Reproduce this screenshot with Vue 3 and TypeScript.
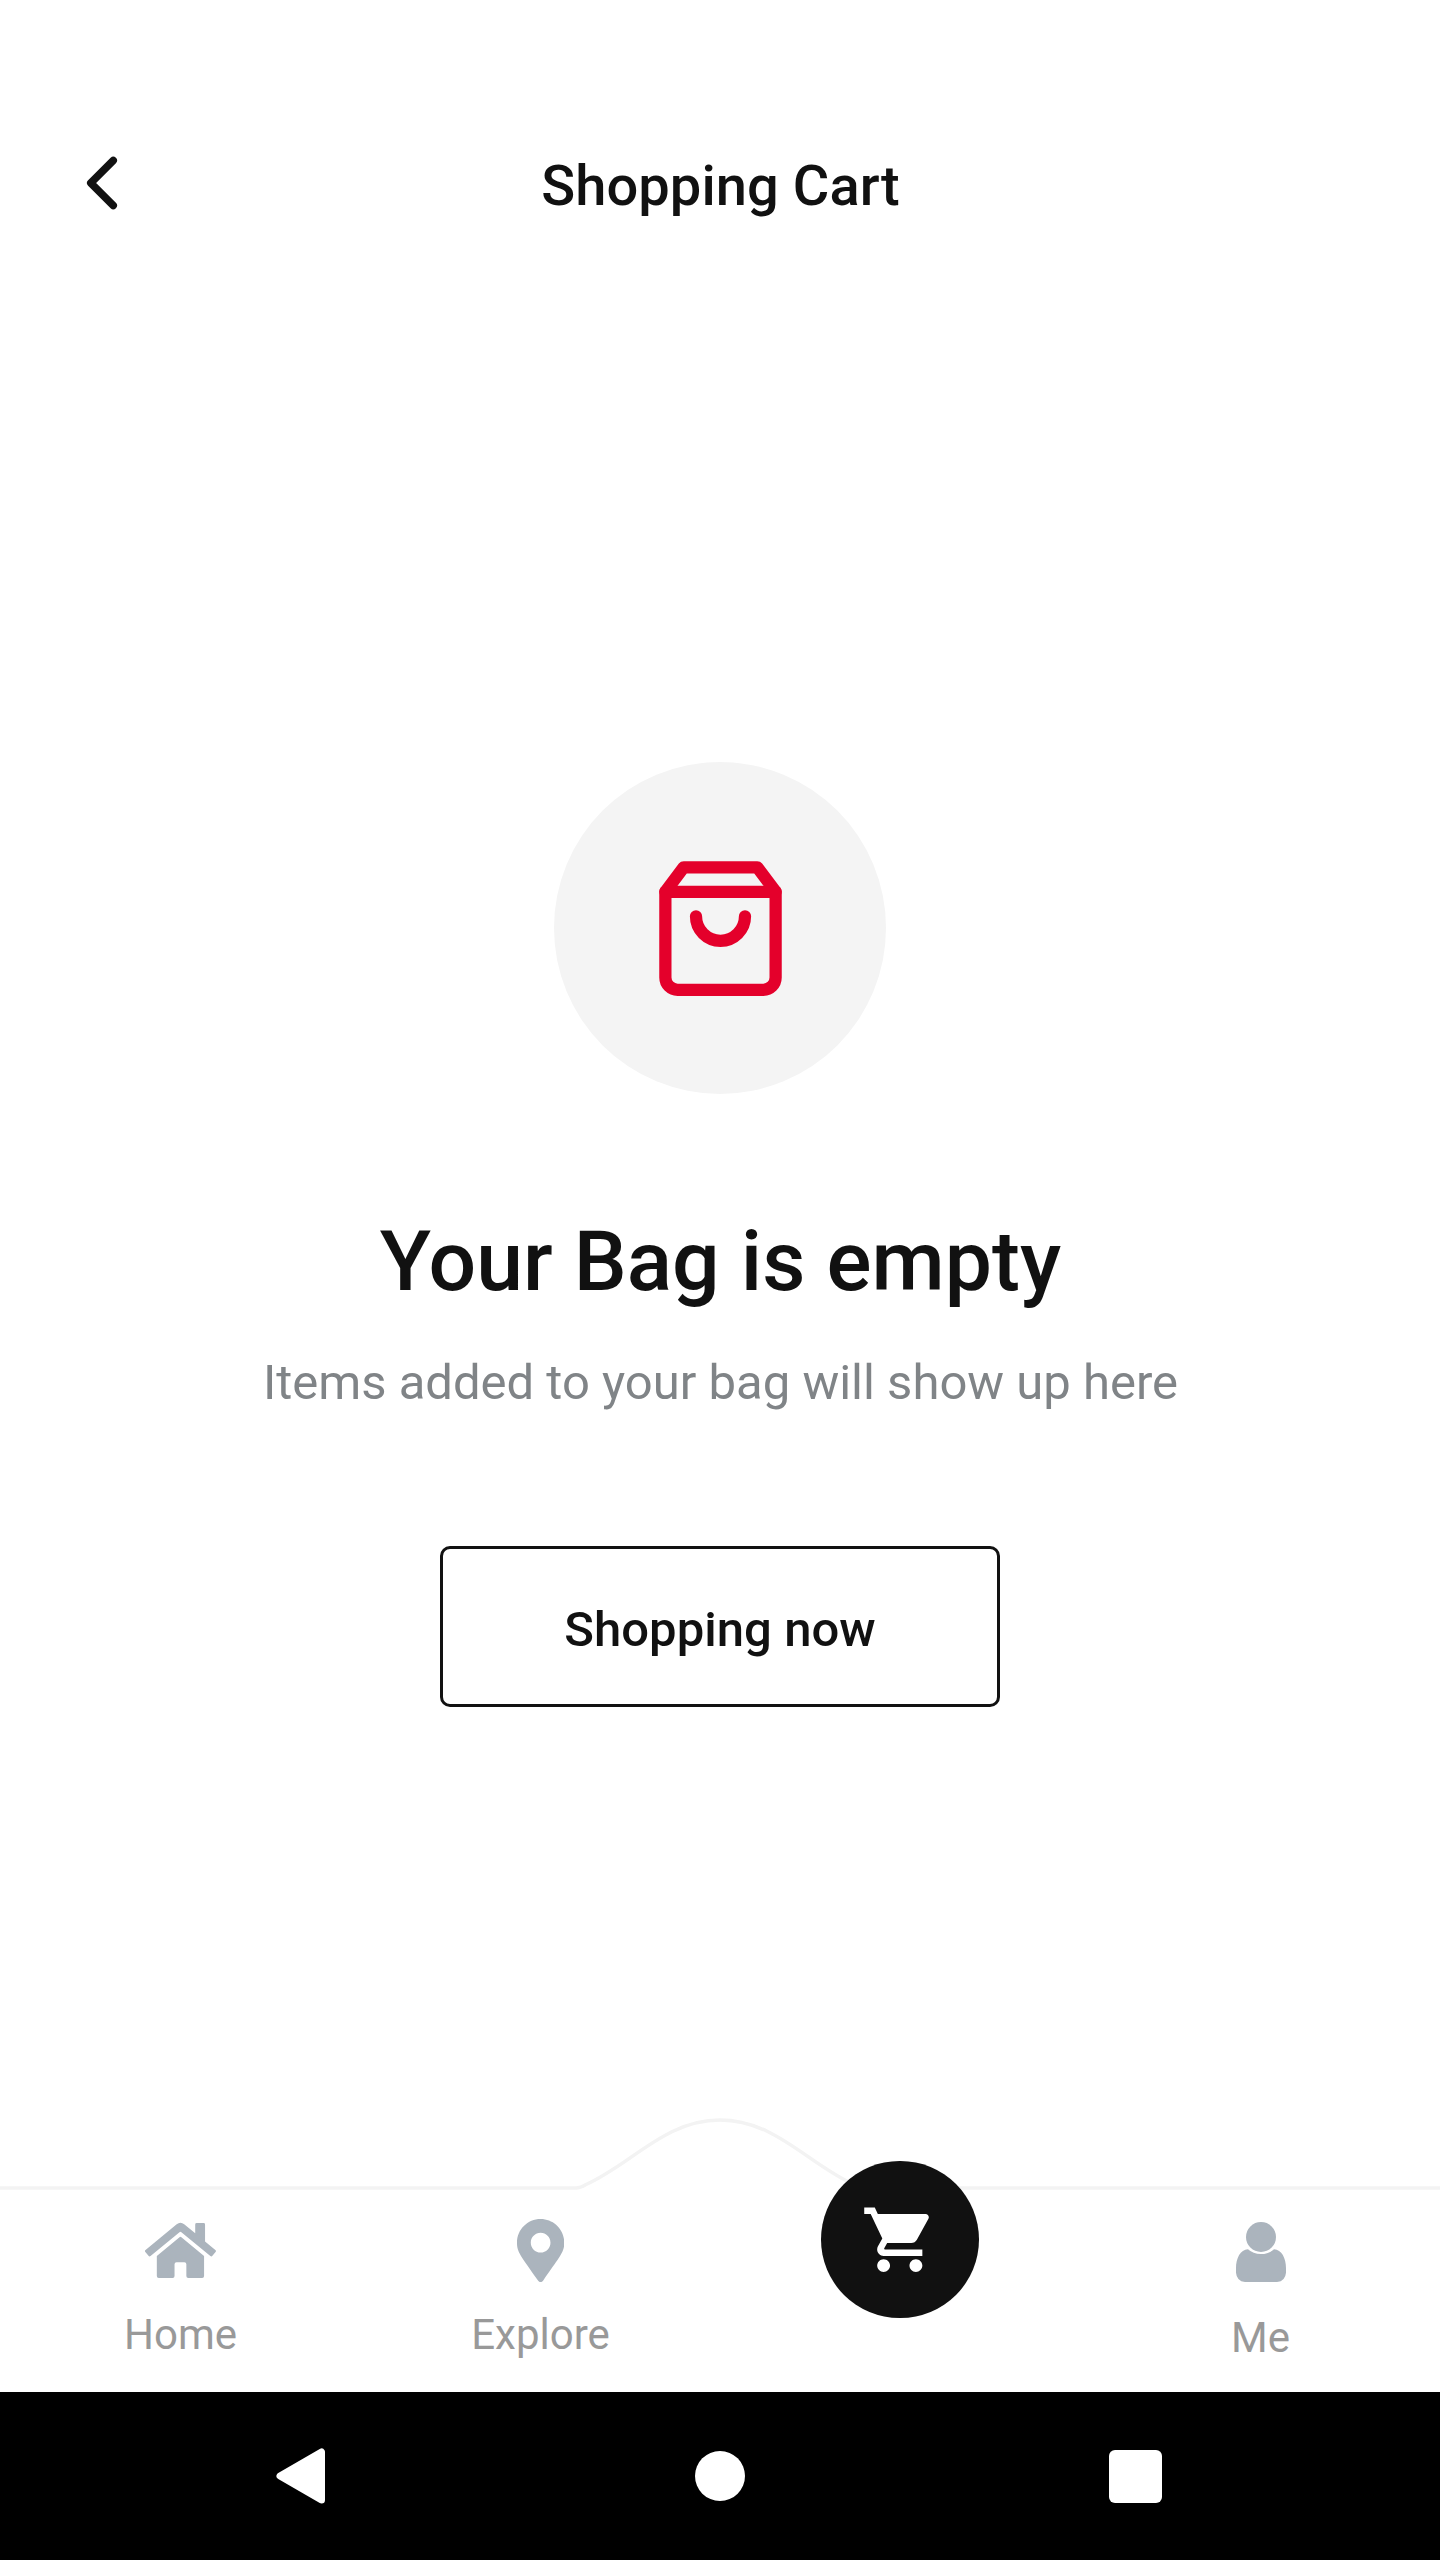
<script setup lang="ts">
interface Tab {
  id: string
  label: string
  viewBox: string
  width: number
  height: number
  paths: string[]
}

const tabs: Tab[] = [
  {
    id: 'home',
    label: 'Home',
    viewBox: '0 0 576 512',
    width: 70.9,
    height: 63,
    paths: [
      'M280.37 148.26L96 300.11V464a16 16 0 0 0 16 16l112.06-.29a16 16 0 0 0 15.92-16V368a16 16 0 0 1 16-16h64a16 16 0 0 1 16 16v95.64a16 16 0 0 0 16 16.05L464 480a16 16 0 0 0 16-16V300L295.67 148.26a12.19 12.19 0 0 0-15.3 0zM571.6 251.47L488 182.56V44.05a12 12 0 0 0-12-12h-56a12 12 0 0 0-12 12v72.61L318.47 43a48 48 0 0 0-61 0L4.34 251.47a12 12 0 0 0-1.6 16.9l25.5 31A12 12 0 0 0 45.15 301l235.22-193.74a12.19 12.19 0 0 1 15.3 0L530.9 301a12 12 0 0 0 16.9-1.6l25.5-31a12 12 0 0 0-1.7-16.93z',
    ],
  },
  {
    id: 'explore',
    label: 'Explore',
    viewBox: '0 0 384 512',
    width: 47.25,
    height: 63,
    paths: [
      'M172.268 501.67C26.97 291.031 0 269.413 0 192 0 85.961 85.961 0 192 0s192 85.961 192 192c0 77.413-26.97 99.031-172.268 309.67-9.535 13.774-29.93 13.773-39.464 0zM192 272c44.183 0 80-35.817 80-80s-35.817-80-80-80-80 35.817-80 80 35.817 80 80 80z',
    ],
  },
  { id: 'cart', label: '', viewBox: '', width: 0, height: 0, paths: [] },
  {
    id: 'me',
    label: 'Me',
    viewBox: '168 126 150 180',
    width: 50,
    height: 60,
    paths: [
      'M243 126a45 45 0 1 0 0 90a45 45 0 1 0 0-90z',
      'M204 208Q219 222 243 222Q267 222 282 208C305 209 318 235 318 265V278Q316 303 291 306H195Q170 303 168 278V265C168 235 181 209 204 208z',
    ],
  },
]
</script>

<template>
  <div class="screen">
    <header class="header">
      <svg class="back" viewBox="0 0 24 24" aria-label="Back">
        <polyline points="15 18 9 12 15 6" />
      </svg>
      <h1 class="title">Shopping Cart</h1>
    </header>

    <main class="empty">
      <div class="badge">
        <svg class="bag" viewBox="0 0 24 24">
          <path d="M6 2L3 6v14a2 2 0 0 0 2 2h14a2 2 0 0 0 2-2V6l-3-4z" />
          <line x1="3" y1="6" x2="21" y2="6" />
          <path d="M16 10a4 4 0 0 1-8 0" />
        </svg>
      </div>
      <h2 class="heading">Your Bag is empty</h2>
      <p class="hint">Items added to your bag will show up here</p>
      <button class="action" type="button">Shopping now</button>
    </main>

    <nav class="tabs">
      <svg class="curve" viewBox="0 0 1440 76">
        <path d="M0 70H576Q580 70 586 66.5C632 46 665 2 720 2S808 46 854 66.5Q860 70 864 70H1440" />
      </svg>
      <div v-for="tab in tabs" :key="tab.id" class="tab" :class="tab.id">
        <div v-if="tab.id === 'cart'" class="fab">
          <svg viewBox="0 0 24 24">
            <path d="M7 18c-1.1 0-1.99.9-1.99 2S5.9 22 7 22s2-.9 2-2-.9-2-2-2zM1 2v2h2l3.6 7.59-1.35 2.45c-.16.28-.25.61-.25.96 0 1.1.9 2 2 2h12v-2H7.42c-.14 0-.25-.11-.25-.25l.03-.12.9-1.63h7.45c.75 0 1.41-.41 1.75-1.03l3.58-6.49c.08-.14.12-.31.12-.48 0-.55-.45-1-1-1H5.21l-.94-2H1zm16 16c-1.1 0-1.99.9-1.99 2s.89 2 1.99 2 2-.9 2-2-.9-2-2-2z" />
          </svg>
        </div>
        <template v-else>
          <span class="icon">
            <svg :viewBox="tab.viewBox" :width="tab.width" :height="tab.height">
              <path v-for="d in tab.paths" :key="d" :d="d" />
            </svg>
          </span>
          <span class="label">{{ tab.label }}</span>
        </template>
      </div>
    </nav>

    <footer class="system">
      <svg class="sys-back" viewBox="0 0 50 56"><path d="M4 28L45.5 4V52z" /></svg>
      <span class="sys-home"></span>
      <span class="sys-recent"></span>
    </footer>
  </div>
</template>

<style>
body {
  margin: 0;
  background: #fff;
}
</style>

<style scoped>
.screen {
  width: 1440px;
  height: 2560px;
  display: flex;
  flex-direction: column;
  overflow: hidden;
  background: #fff;
  color: #111;
  font-family: Roboto, sans-serif;
}
.header {
  height: 300px;
  box-sizing: border-box;
  padding: 138px 57px 0;
  display: grid;
  grid-template-columns: 90px 1fr 90px;
  align-items: start;
}
.back {
  width: 90px;
  height: 90px;
  fill: none;
  stroke: #111;
  stroke-width: 2;
  stroke-linecap: round;
  stroke-linejoin: round;
}
.title {
  margin: 15px 0 0 1px;
  font-size: 56px;
  line-height: 66px;
  font-weight: 500;
  letter-spacing: 0.08px;
  text-align: center;
}
.empty {
  flex: 1;
  padding-top: 462px;
  display: flex;
  flex-direction: column;
  align-items: center;
}
.badge {
  width: 332px;
  height: 332px;
  border-radius: 50%;
  background: #f4f4f4;
  display: flex;
  align-items: center;
  justify-content: center;
}
.bag {
  width: 147px;
  height: 147px;
  fill: none;
  stroke: #e4002b;
  stroke-width: 2;
  stroke-linecap: round;
  stroke-linejoin: round;
}
.heading {
  margin: 119px 0 0 1px;
  font-size: 84px;
  line-height: 98px;
  font-weight: 500;
  letter-spacing: 0.05px;
}
.hint {
  margin: 43px 0 0 1px;
  font-size: 49px;
  line-height: 58px;
  color: #808487;
}
.action {
  margin: 134px 0 0;
  width: 560px;
  height: 161px;
  box-sizing: border-box;
  padding: 7px 0 0;
  border: 3px solid #111;
  border-radius: 10px;
  background: transparent;
  color: #111;
  font: 500 49px/58px Roboto, sans-serif;
  letter-spacing: 0.05px;
}
.tabs {
  position: relative;
  height: 274px;
  display: grid;
  grid-template-columns: repeat(4, 1fr);
}
.curve {
  position: absolute;
  inset: 0 0 auto;
  width: 1440px;
  height: 76px;
  fill: none;
  stroke: #f3f3f3;
  stroke-width: 3.5;
}
.tab {
  position: relative;
  display: flex;
  flex-direction: column;
  align-items: center;
  padding: 100.5px 0 0 1px;
}
.tab.me {
  padding-top: 103.5px;
}
.tab.cart {
  padding: 42.5px 0 0;
}
.icon {
  height: 63px;
}
.icon svg {
  display: block;
  fill: #abb4bd;
}
.label {
  margin-top: 28px;
  font-size: 42px;
  line-height: 50px;
  color: #999;
}
.fab {
  width: 157.5px;
  height: 157.5px;
  border-radius: 50%;
  background: #111;
  display: flex;
  align-items: center;
  justify-content: center;
}
.fab svg {
  width: 77.5px;
  height: 77.5px;
  fill: #fff;
}
.system {
  height: 168px;
  background: #000;
  display: grid;
  grid-template-columns: 50px 50px 53px;
  align-items: center;
  justify-content: space-between;
  padding: 0 278px 0 275.5px;
}
.sys-back {
  width: 50px;
  height: 56px;
  fill: #fff;
  stroke: #fff;
  stroke-width: 7;
  stroke-linejoin: round;
}
.sys-home {
  width: 50px;
  height: 50px;
  margin-left: 3px;
  border-radius: 50%;
  background: #fff;
}
.sys-recent {
  width: 53px;
  height: 53px;
  border-radius: 6px;
  background: #fff;
}
</style>
